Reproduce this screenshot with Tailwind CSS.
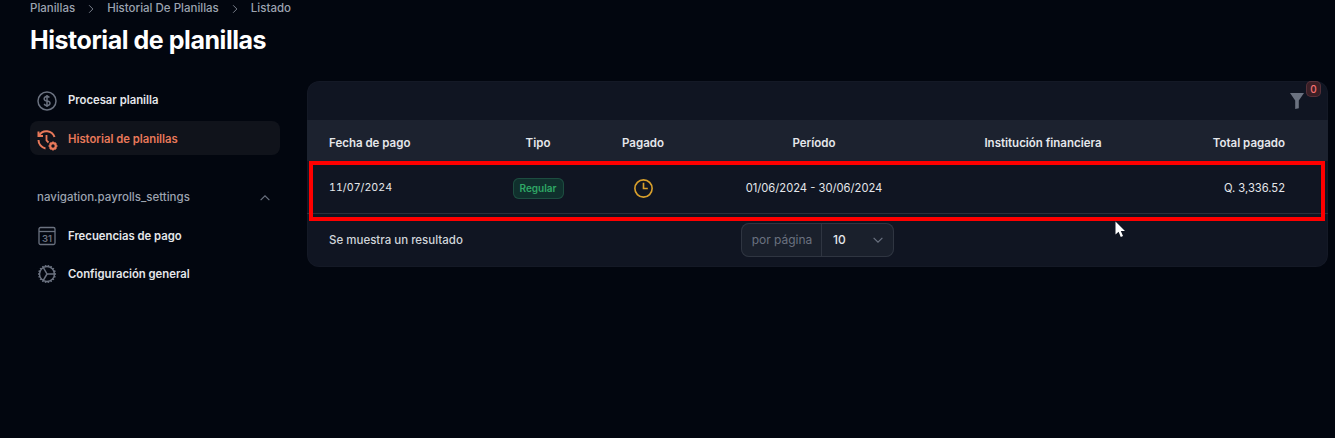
<!DOCTYPE html>
<html lang="es">
<head>
  <meta charset="UTF-8">
  <title>Historial de planillas</title>
  <script src="https://cdn.jsdelivr.net/npm/@tailwindcss/browser@4"></script>
</head>
<body class="relative h-[438px] overflow-hidden bg-[#02060f] font-['Inter','Liberation_Sans',sans-serif] text-white">

  <!-- encabezado -->
  <header class="pt-[2px] pl-[30px]">
    <nav class="flex h-[14px] items-center text-[11.5px] font-medium text-[#9ca3af]">
      <span>Planillas</span>
      <svg class="mx-[10px] h-3 w-3" fill="none" viewBox="0 0 24 24" stroke="currentColor" stroke-width="1.5"><path d="M8.25 4.5l7.5 7.5-7.5 7.5"/></svg>
      <span>Historial De Planillas</span>
      <svg class="mx-[10px] h-3 w-3" fill="none" viewBox="0 0 24 24" stroke="currentColor" stroke-width="1.5"><path d="M8.25 4.5l7.5 7.5-7.5 7.5"/></svg>
      <span>Listado</span>
    </nav>
    <h1 class="mt-[7px] text-[25px] leading-[34px] font-bold tracking-[-0.45px]">Historial de planillas</h1>
  </header>

  <div class="mt-[24px] flex items-start pr-[7px] pl-[30px]">
    <!-- menu lateral -->
    <aside class="mt-[2px] w-[250px] shrink-0">
      <ul class="flex flex-col gap-1">
        <li class="flex h-[34px] items-center gap-[9px] rounded-lg px-[5px] pt-[1px] text-[11.3px] font-semibold text-[#e5e7eb]">
          <svg class="h-6 w-6 text-[#6b7280]" fill="none" viewBox="0 0 24 24" stroke="currentColor" stroke-width="1.5"><path d="M12 6v12m-3-2.818l.879.659c1.171.879 3.07.879 4.242 0 1.172-.879 1.172-2.303 0-3.182C13.536 12.219 12.768 12 12 12c-.725 0-1.45-.22-2.003-.659-1.106-.879-1.106-2.303 0-3.182s2.9-.879 4.006 0l.415.33M21 12a9 9 0 11-18 0 9 9 0 0118 0z"/></svg>
          <span>Procesar planilla</span>
        </li>
        <li class="flex h-[34px] items-center gap-[9px] rounded-lg bg-[#10131b] px-[5px] pt-[3px] text-[11.3px] font-semibold text-[#e8795a]">
          <svg class="h-6 w-6" fill="none" viewBox="0 0 24 24" stroke="currentColor" stroke-width="2">
            <path d="M4 7.500A8.500 8.500 0 0 1 19.500 9"/>
            <path d="M3.500 3.500V8H8"/>
            <path d="M3.500 12a8.500 8.500 0 0 0 7 8.400"/>
            <path d="M11.500 7v5.500l2 2" stroke-width="1.800"/>
            <circle cx="18" cy="18" r="2.800" stroke-width="2.200"/>
            <path d="M18 13.500v1.200M18 21.300v1.200M13.500 18h1.200M21.300 18h1.200M14.900 14.900l.8.8M20.300 20.300l.8.8M14.900 21.100l.8-.8M20.300 15.700l.8-.8" stroke-width="1.600"/>
          </svg>
          <span>Historial de planillas</span>
        </li>
      </ul>

      <div class="mt-[31px] flex h-[24px] items-center justify-between pr-[8px] pl-[7px] text-[11.5px] font-medium text-[#9ca3af]">
        <span>navigation.payrolls_settings</span>
        <svg class="h-[14px] w-[14px] text-[#6b7280]" fill="none" viewBox="0 0 24 24" stroke="currentColor" stroke-width="2"><path d="M4.500 15.750l7.500-7.500 7.500 7.500"/></svg>
      </div>

      <ul class="mt-[9px] flex flex-col gap-1">
        <li class="flex h-[34px] items-center gap-[9px] rounded-lg px-[5px] text-[11.3px] font-semibold text-[#e5e7eb]">
          <svg class="h-6 w-6 text-[#6b7280]" fill="none" viewBox="0 0 24 24" stroke="currentColor" stroke-width="1.3">
            <rect x="4" y="3.500" width="16" height="17" rx="1.500"/>
            <path d="M4 7.500h16"/>
            <text x="12" y="18" text-anchor="middle" font-size="9.500" font-weight="600" fill="currentColor" stroke="none">31</text>
          </svg>
          <span>Frecuencias de pago</span>
        </li>
        <li class="flex h-[34px] items-center gap-[9px] rounded-lg px-[5px] text-[11.3px] font-semibold text-[#e5e7eb]">
          <svg class="h-6 w-6 text-[#6b7280]" fill="none" viewBox="0 0 24 24" stroke="currentColor" stroke-width="1.5"><path d="M4.500 12a7.500 7.500 0 0015 0m-15 0a7.500 7.500 0 1115 0m-15 0H3m16.500 0H21m-1.500 0H12m-8.457 3.077l1.410-.513m14.095-5.130l1.410-.513M5.106 17.785l1.150-.964m11.490-9.642l1.149-.964M7.501 19.795l.75-1.300m7.500-12.990l.75-1.300m-6.063 16.658l.26-1.477m2.605-14.772l.26-1.477m0 17.726l-.26-1.477M10.698 4.614l-.26-1.477M16.500 19.794l-.75-1.299M7.500 4.205L12 12m6.894 5.785l-1.149-.964M6.256 7.178l-1.150-.964m15.352 8.864l-1.410-.513M4.954 9.435l-1.410-.514M12.002 12l-3.750 6.495"/></svg>
          <span>Configuración general</span>
        </li>
      </ul>
    </aside>

    <!-- tabla -->
    <main class="ml-[27px] h-[186px] flex-1 rounded-xl bg-[#101522] ring-1 ring-white/2 ring-inset">
      <div class="relative h-[39px]">
        <svg class="absolute top-[12px] right-[24px] h-4 w-[14px] text-[#6b7280]" viewBox="0 0 14 16" fill="currentColor"><path d="M0 0H14L8.800 7.500V15.200L5.200 16V7.500z"/></svg>
        <span class="absolute top-[1px] right-[8px] flex h-[14px] w-[13px] items-center justify-center rounded-[4px] bg-[#3a1f26] text-[10px] font-medium text-[#f87171] ring-1 ring-[#f87171]/30">0</span>
      </div>

      <div class="grid h-[41px] grid-cols-[161px_96px_114px_228px_230px_127px] items-center bg-[#1c222f] pt-[7px] pl-[22px] text-[11.500px] font-semibold text-[#e5e7eb]">
        <span>Fecha de pago</span>
        <span class="text-center">Tipo</span>
        <span class="text-center">Pagado</span>
        <span class="text-center">Período</span>
        <span class="text-center">Institución financiera</span>
        <span class="text-right">Total pagado</span>
      </div>

      <div class="grid h-[53px] grid-cols-[161px_96px_114px_228px_230px_127px] items-center border-b border-[#2a303c] pt-[3px] pl-[22px] text-[11.200px] text-[#e5e7eb]">
        <span class="text-[10.700px] tabular-nums">11/07/2024</span>
        <span class="flex justify-center">
          <span class="flex h-[21px] w-[51px] items-center justify-center rounded-md bg-[#10302d] text-[10px] font-semibold text-[#2fa866] ring-1 ring-[#1d4d40] ring-inset">Regular</span>
        </span>
        <span class="flex justify-center">
          <svg class="h-[23px] w-[23px] text-[#d9a02c]" fill="none" viewBox="0 0 24 24" stroke="currentColor" stroke-width="1.700"><path d="M12 6v6h4.500m4.500 0a9 9 0 11-18 0 9 9 0 0118 0z"/></svg>
        </span>
        <span class="text-center">01/06/2024 - 30/06/2024</span>
        <span></span>
        <span class="text-right">Q. 3,336.52</span>
      </div>

      <div class="relative flex h-[52px] items-center pt-[2px] pl-[22px] text-[11.500px] font-medium text-[#d1d5db]">
        <span>Se muestra un resultado</span>
        <div class="absolute top-[9px] left-[434px] flex h-[34px] w-[153px] items-center rounded-lg bg-[#1a202c] ring-1 ring-[#2f3541] ring-inset">
          <span class="flex h-full w-[81px] items-center justify-center border-r border-[#2f3541] pl-[2px] text-[12px] font-normal text-[#6b7280]">por página</span>
          <span class="flex-1 pl-[11px] text-[12px] text-[#e5e7eb]">10</span>
          <svg class="mr-[9px] h-[14px] w-[14px] text-[#6b7280]" fill="none" viewBox="0 0 24 24" stroke="currentColor" stroke-width="2"><path d="M19.500 8.250l-7.500 7.500-7.500-7.500"/></svg>
        </div>
      </div>
    </main>
  </div>

  <!-- recuadro rojo sobre la fila -->
  <div class="pointer-events-none absolute top-[161px] left-[309px] h-[60px] w-[1016px] border-4 border-[#ff0000]"></div>

  <!-- cursor -->
  <svg class="absolute top-[221px] left-[1115px] h-[17px] w-[11px]" viewBox="0 0 11 17" fill="#fff"><path d="M0.500 0.500V13.500L3.600 10.800L5.800 16L8 15L5.800 10H10z"/></svg>
</body>
</html>
